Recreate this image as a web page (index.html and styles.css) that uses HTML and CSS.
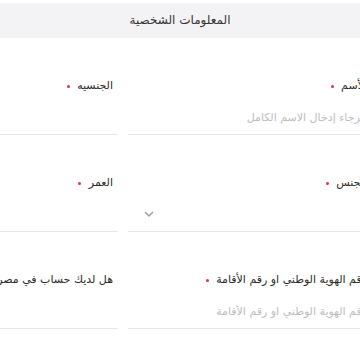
FILE: index.html
```html
<!DOCTYPE html>
<html lang="ar" dir="rtl">
<head>
    <meta charset="UTF-8">
    <meta name="viewport" content="width=device-width, initial-scale=1.0">
    <title>المعلومات الشخصية</title>
    <link rel="stylesheet" href="styles.css">
</head>
<body>
    <div class="page">
        <div class="section-title">المعلومات الشخصية</div>
        <div class="form-grid">
            <div class="field">
                <label class="field-label">الأسم <span class="req"></span></label>
                <div class="control">
                    <input type="text" placeholder="الرجاء إدخال الاسم الكامل">
                </div>
            </div>
            <div class="field">
                <label class="field-label">الجنسيه <span class="req"></span></label>
                <div class="control select">
                    <select><option></option></select>
                    <svg class="chevron" width="10" height="6" viewBox="0 0 10 6"><polyline points="1,1 5,5 9,1" fill="none" stroke="#9a9a9a" stroke-width="1.4"/></svg>
                </div>
            </div>
            <div class="field">
                <label class="field-label">الجنس <span class="req"></span></label>
                <div class="control select">
                    <select><option></option></select>
                    <svg class="chevron" width="10" height="6" viewBox="0 0 10 6"><polyline points="1,1 5,5 9,1" fill="none" stroke="#9a9a9a" stroke-width="1.4"/></svg>
                </div>
            </div>
            <div class="field">
                <label class="field-label">العمر <span class="req"></span></label>
                <div class="control select">
                    <select><option></option></select>
                    <svg class="chevron" width="10" height="6" viewBox="0 0 10 6"><polyline points="1,1 5,5 9,1" fill="none" stroke="#9a9a9a" stroke-width="1.4"/></svg>
                </div>
            </div>
            <div class="field">
                <label class="field-label">رقم الهوية الوطني او رقم الأقامة <span class="req"></span></label>
                <div class="control">
                    <input type="text" placeholder="رقم الهوية الوطني او رقم الأقامة">
                </div>
            </div>
            <div class="field">
                <label class="field-label">هل لديك حساب في مصرف الراجحي؟</label>
                <div class="control select">
                    <select><option></option></select>
                    <svg class="chevron" width="10" height="6" viewBox="0 0 10 6"><polyline points="1,1 5,5 9,1" fill="none" stroke="#9a9a9a" stroke-width="1.4"/></svg>
                </div>
            </div>
        </div>
    </div>
</body>
</html>
```

FILE: styles.css
```css
body {
    margin: 0;
    font-family: "DejaVu Sans", "Noto Sans", sans-serif;
    background-color: #ffffff;
    color: #2a2a2a;
    overflow: hidden;
}
.page {
    padding-top: 3px;
}
.section-title {
    background-color: #f3f3f5;
    height: 35px;
    line-height: 35px;
    text-align: center;
    font-size: 12px;
    color: #333333;
}
.form-grid {
    display: grid;
    grid-template-columns: 244px 238px;
    column-gap: 10px;
    row-gap: 40px;
    margin-top: 40px;
    margin-right: -12px;
}
.field {
    display: flex;
    flex-direction: column;
}
.field-label {
    font-size: 11px;
    line-height: 16px;
    height: 16px;
    padding: 0 5px;
    color: #2a2a2a;
    white-space: nowrap;
}
.req {
    display: inline-block;
    width: 3px;
    height: 3px;
    border-radius: 50%;
    background-color: #e0304e;
    vertical-align: middle;
    margin-right: 4px;
}
.control {
    display: flex;
    align-items: center;
    height: 34px;
    margin-top: 6px;
    border-bottom: 1px solid #e6e6e6;
    padding: 0 5px;
}
.control.select {
    padding-left: 16px;
}
.control input,
.control select {
    flex: 1;
    border: none;
    outline: none;
    background: transparent;
    font-family: inherit;
    font-size: 11px;
    color: #333333;
    padding: 0;
    -webkit-appearance: none;
    appearance: none;
}
.control input::placeholder {
    color: #bdbdbd;
}
.chevron {
    flex-shrink: 0;
}
```
